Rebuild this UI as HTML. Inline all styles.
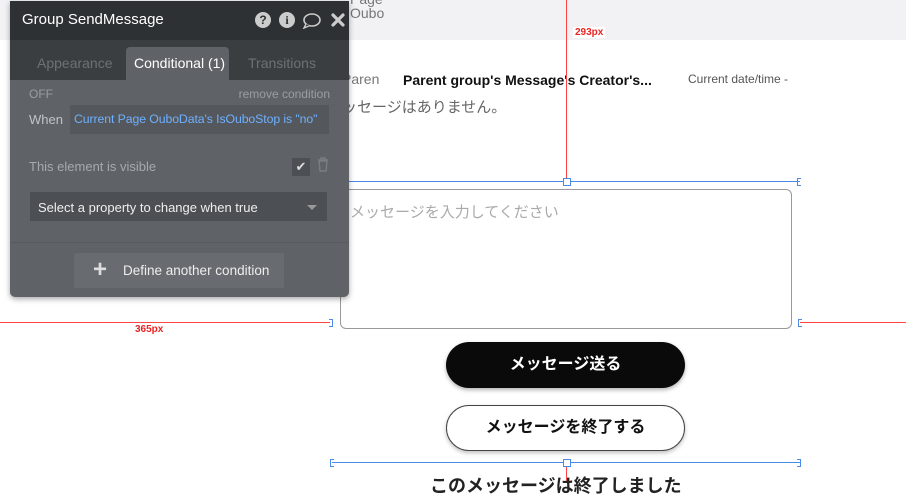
<!DOCTYPE html>
<html><head><meta charset="utf-8"><style>
body{margin:0;width:906px;height:480px;position:relative;overflow:hidden;background:#fff;font-family:"Liberation Sans","Noto Sans CJK JP",sans-serif}
.a{position:absolute}
</style></head><body>
<div class="a" style="left:0;top:0;width:906px;height:40px;background:#f2f2f4"></div>
<div class="a" style="left:350px;top:-8px;font-size:14px;color:#777;line-height:14px">Page<br>Oubo</div>
<div class="a" style="left:342px;top:71px;font-size:14px;color:#777">Paren</div>
<div class="a" style="left:403px;top:72px;font-size:14px;font-weight:bold;color:#111">Parent group's Message's Creator's...</div>
<div class="a" style="left:688px;top:72px;font-size:12px;color:#555">Current date/time -</div>
<div class="a" style="left:342px;top:96px;font-size:15px;color:#666">ッセージはありません。</div>
<div class="a" style="left:566px;top:0;width:1px;height:181px;background:#f44"></div>
<div class="a" style="left:573px;top:27px;font-size:10px;font-weight:bold;color:#e22;background:#fff;padding:0 2px">293px</div>
<div class="a" style="left:340px;top:181px;width:460px;height:1px;background:#4a8ae8"></div>
<div class="a" style="left:563px;top:178px;width:6px;height:6px;border:1px solid #4a8ae8;background:#fff"></div>
<div class="a" style="left:797px;top:178px;width:3px;height:6px;border:1px solid #4a8ae8;border-right:none"></div>
<div class="a" style="left:340px;top:189px;width:450px;height:138px;border:1px solid #999;border-radius:6px"></div>
<div class="a" style="left:350px;top:201px;font-size:15px;color:#aaa">メッセージを入力してください</div>
<div class="a" style="left:0;top:322px;width:330px;height:1px;background:#f44"></div>
<div class="a" style="left:329px;top:319px;width:3px;height:6px;border:1px solid #4a8ae8;border-left:none"></div>
<div class="a" style="left:800px;top:322px;width:106px;height:1px;background:#f44"></div>
<div class="a" style="left:798px;top:319px;width:3px;height:6px;border:1px solid #4a8ae8;border-right:none"></div>
<div class="a" style="left:135px;top:324px;font-size:10px;font-weight:bold;color:#e22">365px</div>
<div class="a" style="left:446px;top:342px;width:239px;height:46px;border-radius:23px;background:#0a0a0a;box-shadow:0 2px 4px rgba(0,0,0,.3);color:#fff;font-weight:bold;font-size:16px;text-align:center;line-height:46px">メッセージ送る</div>
<div class="a" style="left:446px;top:405px;width:237px;height:44px;border-radius:23px;border:1px solid #444;background:#fff;box-shadow:0 2px 4px rgba(0,0,0,.25);color:#111;font-weight:bold;font-size:16px;text-align:center;line-height:44px">メッセージを終了する</div>
<div class="a" style="left:332px;top:462px;width:468px;height:1px;background:#4a8ae8"></div>
<div class="a" style="left:330px;top:459px;width:3px;height:6px;border:1px solid #4a8ae8;border-right:none"></div>
<div class="a" style="left:797px;top:459px;width:3px;height:6px;border:1px solid #4a8ae8;border-left:none"></div>
<div class="a" style="left:566px;top:462px;width:1px;height:20px;background:#f44"></div>
<div class="a" style="left:563px;top:459px;width:6px;height:6px;border:1px solid #4a8ae8;background:#fff"></div>
<div class="a" style="left:430px;top:472px;font-size:18px;font-weight:bold;color:#222">このメッセージは終了しました</div>
<div class="a" style="left:10px;top:1px;width:339px;height:296px;background:#5f6367;border-radius:0 0 5px 5px;box-shadow:0 2px 6px rgba(0,0,0,.35);overflow:hidden">
 <div class="a" style="left:0;top:0;width:339px;height:39px;background:#2e3133"></div>
 <div class="a" style="left:12px;top:10px;font-size:15px;color:#fff">Group SendMessage</div>
 <div class="a" style="left:245px;top:11px;width:16px;height:16px;border-radius:50%;background:#ccc;color:#2e3133;font-size:12px;font-weight:bold;text-align:center;line-height:16px">?</div>
 <div class="a" style="left:269px;top:11px;width:16px;height:16px;border-radius:50%;background:#ccc;color:#2e3133;font-size:12px;font-weight:bold;text-align:center;line-height:16px;font-family:'Liberation Serif',serif">i</div>
 <svg class="a" style="left:292px;top:11px" width="20" height="17"><ellipse cx="10" cy="8" rx="8" ry="6" fill="none" stroke="#ccc" stroke-width="1.6"/><path d="M4 12 L2 16 L8 13.5" fill="#2e3133" stroke="#ccc" stroke-width="1.4"/></svg>
 <svg class="a" style="left:321px;top:12px" width="14" height="14"><path d="M2 2 L12 12 M12 2 L2 12" stroke="#ccc" stroke-width="3.2" stroke-linecap="round"/></svg>
 <div class="a" style="left:0;top:39px;width:339px;height:40px;background:#3b3e41"></div>
 <div class="a" style="left:27px;top:54px;font-size:14px;color:#6d7175">Appearance</div>
 <div class="a" style="left:116px;top:46px;width:103px;height:33px;background:#5f6367;border-radius:4px 4px 0 0"></div>
 <div class="a" style="left:124px;top:54px;font-size:14px;color:#fff">Conditional (1)</div>
 <div class="a" style="left:238px;top:54px;font-size:14px;color:#6d7175">Transitions</div>
 <div class="a" style="left:19px;top:86px;font-size:12px;color:#9a9ea2">OFF</div>
 <div class="a" style="right:19px;top:86px;font-size:12px;color:#9a9ea2">remove condition</div>
 <div class="a" style="left:19px;top:111px;font-size:13px;color:#c0c3c6">When</div>
 <div class="a" style="left:60px;top:104px;width:259px;height:29px;background:#54585c"></div>
 <div class="a" style="left:64px;top:111px;font-size:12.3px;letter-spacing:-0.1px;color:#6fb0ff;white-space:nowrap">Current Page OuboData's IsOuboStop is "no"</div>
 <div class="a" style="left:19px;top:158px;font-size:13px;color:#a6aaae">This element is visible</div>
 <div class="a" style="left:282px;top:157px;width:18px;height:18px;background:#4c5054;color:#ddd;font-size:13px;text-align:center;line-height:18px">✔</div>
 <svg class="a" style="left:307px;top:156px" width="12" height="15"><path d="M1 3 H11 M4 3 V1 H8 V3 M2 4 L3 14 H9 L10 4 Z" fill="none" stroke="#7a7e82" stroke-width="1.4"/></svg>
 <div class="a" style="left:20px;top:191px;width:297px;height:29px;background:#4c5054"></div>
 <div class="a" style="left:28px;top:199px;font-size:13px;color:#eee">Select a property to change when true</div>
 <div class="a" style="left:297px;top:204px;width:0;height:0;border:5px solid transparent;border-top:5px solid #999"></div>
 <div class="a" style="left:0;top:241px;width:339px;height:1px;background:#575b5f"></div>
 <div class="a" style="left:64px;top:252px;width:210px;height:35px;background:#686c70;border-radius:2px"></div>
 <div class="a" style="left:83px;top:255px;font-size:24px;font-weight:bold;color:#ddd;line-height:28px">+</div>
 <div class="a" style="left:113px;top:262px;font-size:13.5px;color:#eee">Define another condition</div>
</div>
</body></html>
